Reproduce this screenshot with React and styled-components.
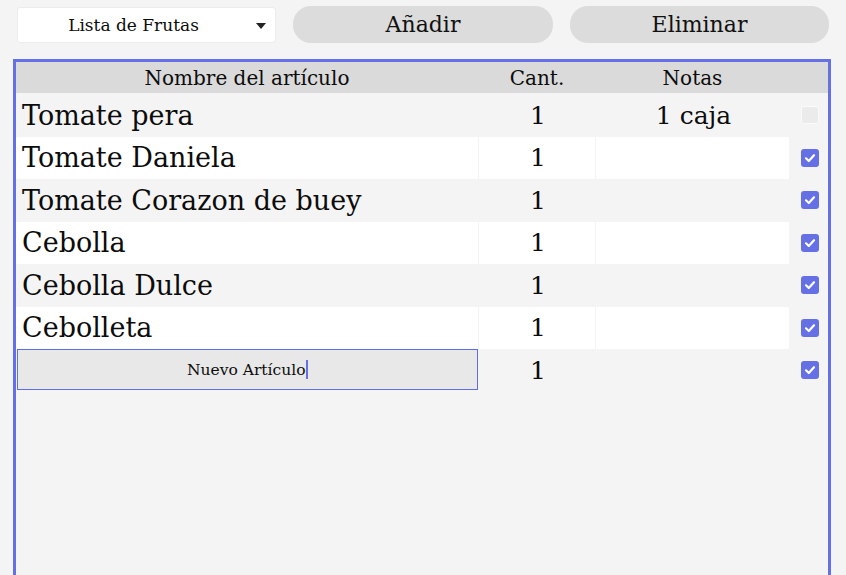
import React from 'react'
import styled, { createGlobalStyle } from 'styled-components'

const GlobalStyle = createGlobalStyle`
  html, body {
    margin: 0;
    padding: 0;
    background: #f4f4f4;
    font-family: "DejaVu Serif", Georgia, serif;
    color: #0c0c0c;
  }
`

const Page = styled.div`
  display: flex;
  flex-direction: column;
  gap: 16px;
  padding: 6px 15px 0 13px;
  height: 575px;
  box-sizing: border-box;
  overflow: hidden;
`

const Toolbar = styled.div`
  display: grid;
  grid-template-columns: 259px 260px 259px;
  column-gap: 17px;
  padding-left: 4px;
`

const ListSelect = styled.div`
  position: relative;
  height: 36px;
  margin-top: 1px;
  background: #fff;
  border: 1px solid #ececec;
  border-radius: 3px;
  box-sizing: border-box;
  display: flex;
  align-items: center;
  justify-content: center;
  padding-right: 26px;
  font-size: 17px;
`

const Caret = styled.span`
  position: absolute;
  right: 9px;
  top: 15px;
  width: 0;
  height: 0;
  border-left: 5px solid transparent;
  border-right: 5px solid transparent;
  border-top: 6px solid #222;
`

const PillButton = styled.button`
  height: 37px;
  border: none;
  border-radius: 18px;
  background: #dcdcdc;
  font-family: inherit;
  font-size: 22px;
  color: #111;
  cursor: pointer;
`

const Table = styled.div`
  border: 3px solid #6470e4;
  border-bottom: none;
  flex: 1;
  display: flex;
  flex-direction: column;
`

const Row = styled.div`
  display: grid;
  grid-template-columns: 462px 116px 193px 1fr;
  column-gap: 1px;
  height: ${p => p.$h || 42.5}px;
  flex-shrink: 0;
  background: ${p => p.$head ? '#dadada' : 'transparent'};
  margin-bottom: ${p => p.$head ? 1 : 0}px;
`

const HeadCell = styled.div`
  display: flex;
  align-items: center;
  justify-content: center;
  font-size: 20px;
`

const Cell = styled.div`
  display: flex;
  align-items: center;
  justify-content: ${p => p.$left ? 'flex-start' : 'center'};
  padding-left: ${p => p.$left ? 6 : 2}px;
  background: ${p => p.$white ? '#fff' : '#f4f4f4'};
  font-size: ${p => p.$big ? 27 : 25}px;
  white-space: nowrap;
`

const CheckCell = styled.div`
  display: flex;
  align-items: center;
  justify-content: center;
  padding-left: 2px;
`

const Box = styled.span`
  width: 18px;
  height: 18px;
  border-radius: 3px;
  box-sizing: border-box;
  background: ${p => p.$on ? '#6470e4' : '#ebebeb'};
  border: ${p => p.$on ? 'none' : '1px solid #fbfbfb'};
  display: flex;
  align-items: center;
  justify-content: center;
`

// input for the next item, shown focused
const NewItem = styled.div`
  margin-left: 1px;
  height: 41px;
  box-sizing: border-box;
  background: #e8e8e8;
  border: 1px solid #5f6de8;
  display: flex;
  align-items: center;
  justify-content: center;
  font-size: 15.5px;
`

const TextCaret = styled.span`
  display: inline-block;
  width: 1.5px;
  height: 19px;
  background: #6470e4;
  margin-left: 1px;
  vertical-align: middle;
`

const Check = ({ on }) => (
  <Box $on={on}>
    {on && (
      <svg width="12" height="12" viewBox="0 0 12 12">
        <path d="M2 6.3 L4.8 9 L10 3.2" fill="none" stroke="#fff" strokeWidth="2.2" strokeLinecap="round" strokeLinejoin="round" />
      </svg>
    )}
  </Box>
)

const items = [
  { name: 'Tomate pera', qty: 1, notes: '1 caja', done: false },
  { name: 'Tomate Daniela', qty: 1, notes: '', done: true },
  { name: 'Tomate Corazon de buey', qty: 1, notes: '', done: true },
  { name: 'Cebolla', qty: 1, notes: '', done: true },
  { name: 'Cebolla Dulce', qty: 1, notes: '', done: true },
  { name: 'Cebolleta', qty: 1, notes: '', done: true },
]

export default function App() {
  return (
    <>
      <GlobalStyle />
      <Page>
        <Toolbar>
          <ListSelect>
            Lista de Frutas
            <Caret />
          </ListSelect>
          <PillButton>Añadir</PillButton>
          <PillButton>Eliminar</PillButton>
        </Toolbar>
        <Table>
          <Row $head $h={31}>
            <HeadCell>Nombre del artículo</HeadCell>
            <HeadCell>Cant.</HeadCell>
            <HeadCell>Notas</HeadCell>
            <HeadCell />
          </Row>
          {items.map((item, i) => (
            <Row key={item.name}>
              <Cell $left $big $white={i % 2 === 1}>{item.name}</Cell>
              <Cell $white={i % 2 === 1}>{item.qty}</Cell>
              <Cell $white={i % 2 === 1}>{item.notes}</Cell>
              <CheckCell><Check on={item.done} /></CheckCell>
            </Row>
          ))}
          <Row>
            <NewItem>Nuevo Artículo<TextCaret /></NewItem>
            <Cell>1</Cell>
            <Cell />
            <CheckCell><Check on /></CheckCell>
          </Row>
        </Table>
      </Page>
    </>
  )
}
